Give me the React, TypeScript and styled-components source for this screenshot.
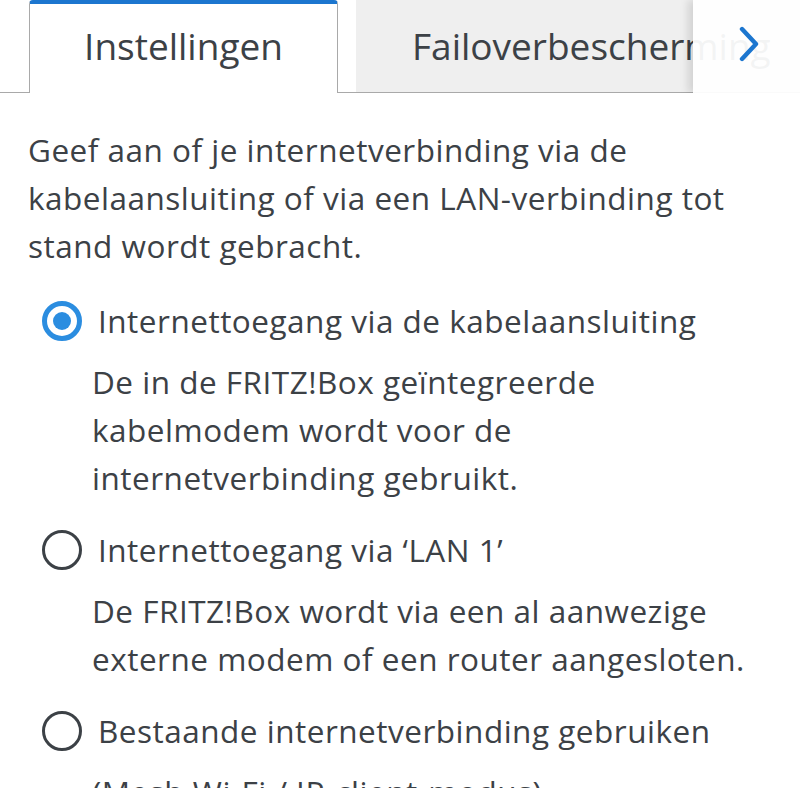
import React from "react"
import styled, {createGlobalStyle} from "styled-components"

const GlobalStyle = createGlobalStyle`
  html, body {
    margin: 0;
    padding: 0;
    background: #fff;
  }
  body {
    font-family: "Open Sans", "Noto Sans", sans-serif;
    color: #3c4146;
    overflow: hidden;
  }
`

type Option = {
  id: string
  label: string
  lines: string[]
}

const options: Option[] = [
  {
    id: 'cable',
    label: 'Internettoegang via de kabelaansluiting',
    lines: [
      'De in de FRITZ!Box geïntegreerde',
      'kabelmodem wordt voor de',
      'internetverbinding gebruikt.',
    ],
  },
  {
    id: 'lan',
    label: 'Internettoegang via ‘LAN 1’',
    lines: [
      'De FRITZ!Box wordt via een al aanwezige',
      'externe modem of een router aangesloten.',
    ],
  },
  {
    id: 'mesh',
    label: 'Bestaande internetverbinding gebruiken',
    lines: ['(Mesh Wi-Fi / IP-client-modus)'],
  },
]

const App = () => {
  const [selected, setSelected] = React.useState('cable')

  return <Page>
    <GlobalStyle/>

    <TabBar>
      <TabStrip>
        <Tab active>Instellingen</Tab>
        <Tab>Failoverbescherming</Tab>
      </TabStrip>
      <ScrollMore aria-label="Meer tabbladen">
        <svg width="22" height="36" viewBox="0 0 22 36" fill="none">
          <path d="M4 3 L18 18 L4 33" stroke="#1c76cf" strokeWidth="4.4"
                strokeLinecap="round" strokeLinejoin="round"/>
        </svg>
      </ScrollMore>
    </TabBar>

    <Content>
      <Intro>
        Geef aan of je internetverbinding via de<br/>
        kabelaansluiting of via een LAN-verbinding tot<br/>
        stand wordt gebracht.
      </Intro>

      <OptionList>
        {options.map(o =>
          <OptionItem key={o.id}>
            <OptionRow onClick={() => setSelected(o.id)}>
              <Radio checked={selected === o.id}/>
              <OptionLabel>{o.label}</OptionLabel>
            </OptionRow>
            <OptionDesc>
              {o.lines.map((l, i) => <div key={i}>{l}</div>)}
            </OptionDesc>
          </OptionItem>
        )}
      </OptionList>
    </Content>
  </Page>
}
export default App



const Page = styled.div`
  width: 800px;
  height: 788px;
  overflow: hidden;
  background: #fff;
`

const TabBar = styled.div`
  position: relative;
  height: 93px;
  overflow: hidden;
`

const TabStrip = styled.div`
  display: flex;
  align-items: stretch;
  gap: 18px;
  height: 92px;
  padding-left: 29px;
  border-bottom: 1px solid #a9a9a9;
  white-space: nowrap;
`

const Tab = styled.div<{ active?: boolean }>`
  flex: none;
  display: flex;
  align-items: center;
  justify-content: center;
  box-sizing: border-box;
  padding: 0 56px;
  font-size: 37px;
  ${p => p.active ? `
    width: 309px;
    background: #fff;
    border: 1px solid #a9a9a9;
    border-top: 4px solid #1c76cf;
    border-bottom: none;
    border-radius: 4px 4px 0 0;
    margin-bottom: -1px;
    padding-bottom: 6px;
  ` : `
    background: #efefef;
    padding-bottom: 2px;
  `}
`

const ScrollMore = styled.div`
  position: absolute;
  top: 0;
  right: 0;
  bottom: 0;
  width: 107px;
  display: flex;
  align-items: center;
  padding-left: 45px;
  padding-bottom: 6px;
  box-sizing: border-box;
  background: rgba(255, 255, 255, 0.94);
  box-shadow: -5px 0 8px rgba(0, 0, 0, 0.12);
`

const Content = styled.div`
  padding: 33px 20px 0 28px;
`

const bodyText = `
  font-size: 31.5px;
  line-height: 48px;
  letter-spacing: 0.5px;
`

const Intro = styled.p`
  margin: 0;
  ${bodyText};
`

const OptionList = styled.div`
  display: flex;
  flex-direction: column;
  gap: 24px;
  margin-top: 27px;
`

const OptionItem = styled.div`
  display: flex;
  flex-direction: column;
  gap: 13px;
`

const OptionRow = styled.label`
  display: flex;
  align-items: center;
  gap: 16px;
  padding-left: 14px;
  cursor: pointer;
`

const Radio = styled.span<{ checked?: boolean }>`
  flex: none;
  position: relative;
  box-sizing: border-box;
  width: 40px;
  height: 40px;
  border-radius: 50%;
  border: ${p => p.checked ? '5px solid #2b8de0' : '3.5px solid #3c4146'};
  &::after {
    content: '';
    display: ${p => p.checked ? 'block' : 'none'};
    position: absolute;
    left: 50%;
    top: 50%;
    width: 18px;
    height: 18px;
    margin: -9px 0 0 -9px;
    border-radius: 50%;
    background: #2b8de0;
  }
`

const OptionLabel = styled.span`
  ${bodyText};
`

const OptionDesc = styled.div`
  padding-left: 64px;
  ${bodyText};
`
